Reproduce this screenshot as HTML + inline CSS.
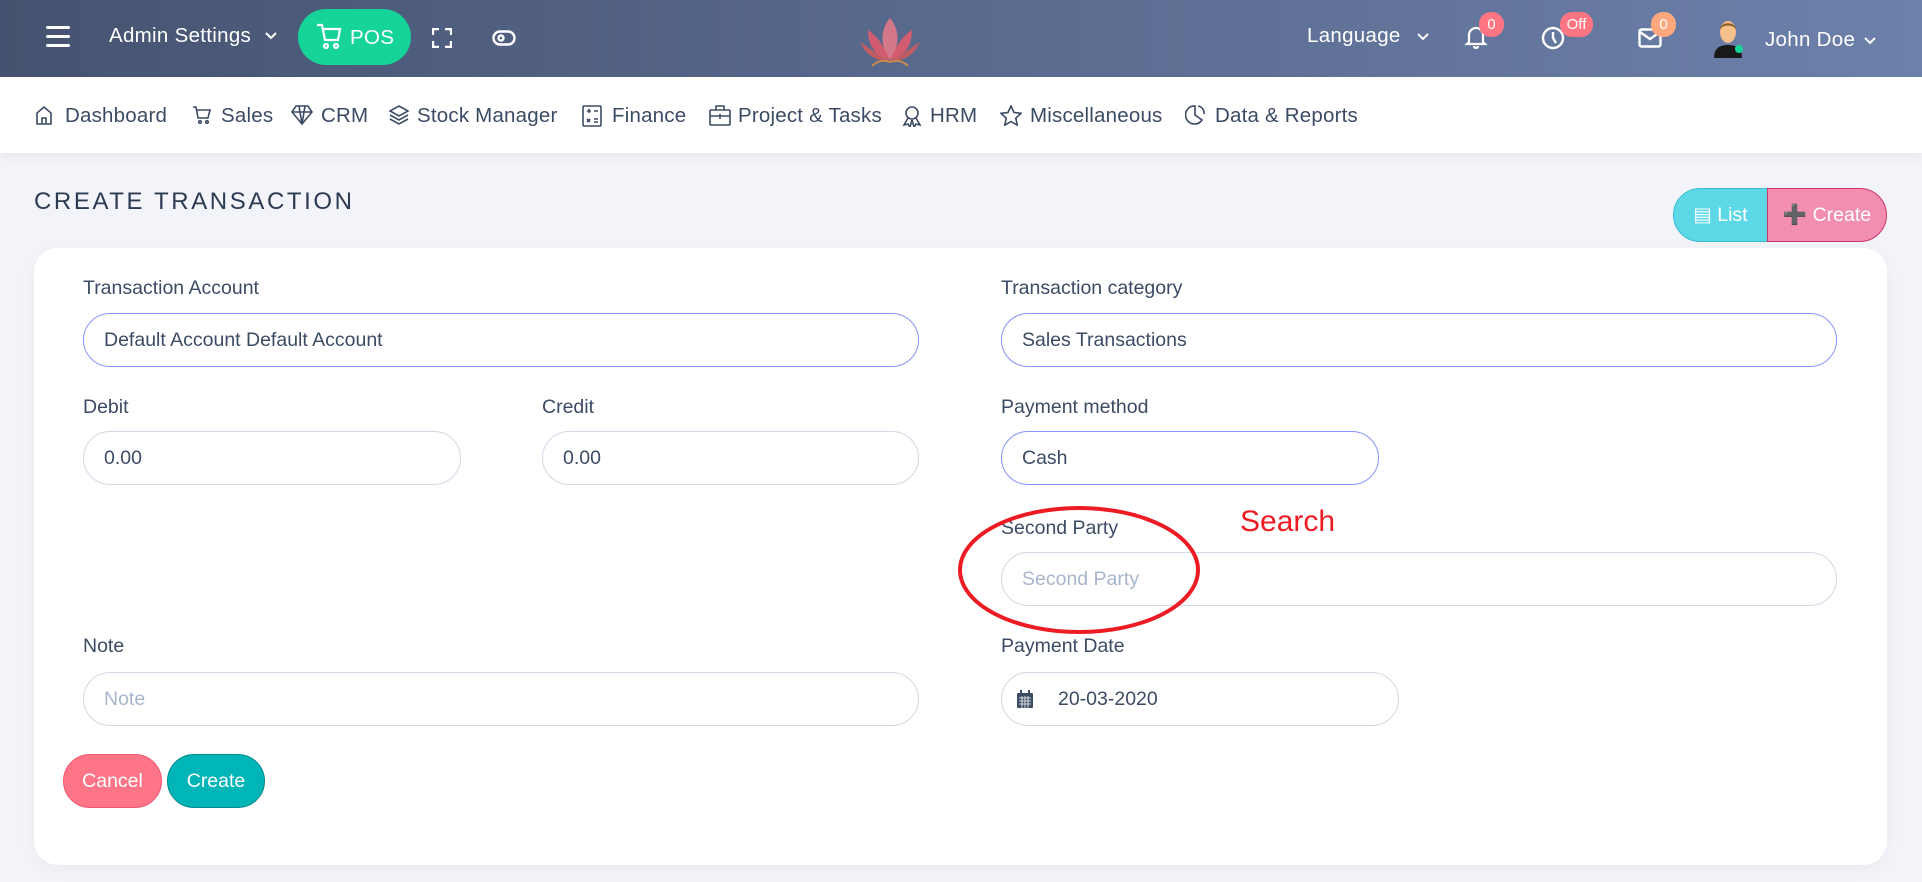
<!DOCTYPE html>
<html><head><meta charset="utf-8"><style>
*{box-sizing:border-box;margin:0;padding:0}
body{width:1922px;height:882px;overflow:hidden;background:#f3f4f9;font-family:"Liberation Sans",sans-serif;color:#3c4b64;position:relative}
.hdr{position:absolute;left:0;top:0;width:1922px;height:77px;background:linear-gradient(90deg,#465370,#5a6a8e 50%,#6c80aa)}
.nav{position:absolute;left:0;top:77px;width:1922px;height:76px;background:#fff;box-shadow:0 4px 10px rgba(0,0,0,.05)}
.a{position:absolute}
.w{color:#fff;font-size:20.5px;letter-spacing:.3px}
.nt{position:absolute;top:104px;font-size:20.5px;color:#3c4b64;letter-spacing:.2px}
.ic{position:absolute;top:105px}
.badge{position:absolute;background:#ff7582;color:#fff;font-size:15px;border-radius:12px;height:25px;min-width:25px;text-align:center;line-height:25px;padding:0 5px}
.card{position:absolute;left:34px;top:248px;width:1853px;height:617px;background:#fff;border-radius:24px;box-shadow:0 4px 20px rgba(0,0,0,.04)}
.lbl{position:absolute;font-size:19.5px;color:#3c4b64}
.inp{position:absolute;height:54px;border:1px solid #d1d9e6;border-radius:27px;font-size:19.5px;color:#3c4b64;padding-left:20px;line-height:52px}
.foc{border-color:#8795f7}
.ph{color:#a8b6cc}
.btn{position:absolute;height:54px;border-radius:27px;color:#fff;font-size:19.5px;text-align:center;line-height:52px}
</style></head><body>
<div class="hdr"></div>
<div class="a" style="left:46px;top:26px;width:24px;height:3px;background:#fff;border-radius:2px"></div>
<div class="a" style="left:46px;top:35px;width:24px;height:3px;background:#fff;border-radius:2px"></div>
<div class="a" style="left:46px;top:44px;width:24px;height:3px;background:#fff;border-radius:2px"></div>
<div class="a w" style="left:109px;top:24px">Admin Settings</div>
<svg class="a" style="left:265px;top:32px" width="12" height="8" fill="none" stroke="#fff" stroke-width="2"><path d="M1 1l5 5 5-5"/></svg>
<div class="a" style="left:298px;top:9px;width:113px;height:56px;border-radius:28px;background:#16d39a"></div>
<svg class="a" style="left:316px;top:22px" width="26" height="28" viewBox="0 0 26 28" fill="none" stroke="#fff" stroke-width="2.2"><path d="M1 3h5l3 15h13l2-11H8"/><circle cx="10" cy="24" r="2"/><circle cx="20" cy="24" r="2"/></svg>
<div class="a w" style="left:350px;top:26px">POS</div>
<svg class="a" style="left:432px;top:28px" width="20" height="20" fill="none" stroke="#fff" stroke-width="2.4"><path d="M1 7V1h6M13 1h6v6M19 13v6h-6M7 19H1v-6"/></svg>
<svg class="a" style="left:492px;top:30px" width="24" height="16" fill="none" stroke="#fff" stroke-width="2.4"><rect x="1.5" y="1.5" width="21" height="13" rx="6.5"/><circle cx="9" cy="8" r="2.5"/></svg>
<svg class="a" style="left:858px;top:16px" width="64" height="52" viewBox="0 0 64 52"><path d="M32 2 C22 14 22 30 32 44 C42 30 42 14 32 2Z" fill="#e07a8a" opacity=".9"/><path d="M10 14 C10 32 20 42 32 44 C26 32 22 22 10 14Z" fill="#e85a6a" opacity=".85"/><path d="M54 14 C54 32 44 42 32 44 C38 32 42 22 54 14Z" fill="#e85a6a" opacity=".85"/><path d="M2 26 C8 40 20 46 32 45 C20 40 12 32 2 26Z" fill="#d85a5a" opacity=".8"/><path d="M62 26 C56 40 44 46 32 45 C44 40 52 32 62 26Z" fill="#d85a5a" opacity=".8"/><path d="M14 50 C20 44 26 44 32 46 C38 44 44 44 50 50" stroke="#c88a4a" stroke-width="2" fill="none"/></svg>
<div class="a w" style="left:1307px;top:24px">Language</div>
<svg class="a" style="left:1417px;top:33px" width="12" height="8" fill="none" stroke="#fff" stroke-width="2"><path d="M1 1l5 5 5-5"/></svg>
<svg class="a" style="left:1464px;top:24px" width="24" height="26" fill="none" stroke="#fff" stroke-width="2.2"><path d="M5 18V11a7 7 0 0 1 14 0v7l2 2H3z"/><path d="M10 22a2 2 0 0 0 4 0"/></svg>
<div class="badge" style="left:1479px;top:12px">0</div>
<svg class="a" style="left:1541px;top:26px" width="24" height="24" fill="none" stroke="#fff" stroke-width="2.4"><circle cx="12" cy="12" r="10"/><path d="M12 6v6l3 5"/></svg>
<div class="badge" style="left:1560px;top:12px;width:33px">Off</div>
<svg class="a" style="left:1638px;top:28px" width="24" height="20" fill="none" stroke="#fff" stroke-width="2.4"><rect x="1.5" y="1.5" width="21" height="17" rx="2"/><path d="M2 4l10 7 10-7"/></svg>
<div class="badge" style="left:1651px;top:12px;background:#ffa87d">0</div>
<svg class="a" style="left:1712px;top:18px" width="32" height="40" viewBox="0 0 32 40"><path d="M2 40 C2 30 8 27 16 27 C24 27 30 30 30 40Z" fill="#1a1a1a"/><ellipse cx="16" cy="14" rx="8" ry="11" fill="#f5c08a"/><path d="M8 12 C8 3 24 3 24 12 C22 6 10 6 8 12Z" fill="#8a5a1a"/><circle cx="27" cy="31" r="4" fill="#16d39a"/></svg>
<div class="a w" style="left:1765px;top:28px">John Doe</div>
<svg class="a" style="left:1864px;top:37px" width="12" height="8" fill="none" stroke="#fff" stroke-width="2"><path d="M1 1l5 5 5-5"/></svg>

<div class="nav"></div>
<svg class="ic" style="left:35px" width="18" height="20" fill="none" stroke="#3c4b64" stroke-width="1.6"><path d="M2 19V8l7-6 7 6v11zM7 19v-6h4v6"/></svg>
<div class="nt" style="left:65px">Dashboard</div>
<svg class="ic" style="left:192px" width="20" height="20" fill="none" stroke="#3c4b64" stroke-width="1.6"><path d="M1 2h3l2 11h10l2-8H5"/><circle cx="8" cy="17" r="1.3"/><circle cx="15" cy="17" r="1.3"/></svg>
<div class="nt" style="left:221px">Sales</div>
<svg class="ic" style="left:291px" width="22" height="20" fill="none" stroke="#3c4b64" stroke-width="1.6"><path d="M5 1h12l4 6-10 12L1 7zM1 7h20M8 1l3 18 3-18"/></svg>
<div class="nt" style="left:321px">CRM</div>
<svg class="ic" style="left:389px" width="20" height="20" fill="none" stroke="#3c4b64" stroke-width="1.6"><path d="M10 1l9 5-9 5-9-5zM1 10l9 5 9-5M1 14l9 5 9-5"/></svg>
<div class="nt" style="left:417px">Stock Manager</div>
<svg class="ic" style="left:582px" width="20" height="22" fill="none" stroke="#3c4b64" stroke-width="1.6"><rect x="1" y="1" width="18" height="20" rx="1"/><path d="M5 6h4M7 4v4M12 6h4M5 14l3 3M8 14l-3 3M12 14h4M12 17h4"/></svg>
<div class="nt" style="left:612px">Finance</div>
<svg class="ic" style="left:709px" width="22" height="21" fill="none" stroke="#3c4b64" stroke-width="1.6"><rect x="1" y="5" width="20" height="15" rx="1"/><path d="M7 5V1h8v4M1 11h20M11 9v5"/></svg>
<div class="nt" style="left:738px">Project &amp; Tasks</div>
<svg class="ic" style="left:902px" width="20" height="22" fill="none" stroke="#3c4b64" stroke-width="1.6"><circle cx="10" cy="8" r="6"/><path d="M6 13l-4 7 4-1 2 3 2-7M14 13l4 7-4-1-2 3-2-7"/></svg>
<div class="nt" style="left:930px">HRM</div>
<svg class="ic" style="left:1000px" width="22" height="21" fill="none" stroke="#3c4b64" stroke-width="1.6"><path d="M11 1l3 6.5 7 .8-5.2 4.8 1.4 7L11 16.6 4.8 20.1l1.4-7L1 8.3l7-.8z"/></svg>
<div class="nt" style="left:1030px">Miscellaneous</div>
<svg class="ic" style="left:1185px" width="20" height="20" fill="none" stroke="#3c4b64" stroke-width="1.6"><path d="M10 1v9l7 5A9 9 0 1 1 10 1zM13 1a7 7 0 0 1 6 8"/></svg>
<div class="nt" style="left:1215px">Data &amp; Reports</div>

<div class="a" style="left:34px;top:188px;font-size:24px;letter-spacing:2.6px;color:#2c3a52">CREATE TRANSACTION</div>
<div class="btn" style="left:1673px;top:188px;width:95px;background:#5dd8e6;border:1px solid #3bbdd0;border-radius:27px 0 0 27px">&#9636; List</div>
<div class="btn" style="left:1767px;top:188px;width:120px;background:#f28fb0;border:1px solid #d0346a;border-radius:0 27px 27px 0">&#10133; Create</div>

<div class="card"></div>
<div class="lbl" style="left:83px;top:277px">Transaction Account</div>
<div class="inp foc" style="left:83px;top:313px;width:836px">Default Account Default Account</div>
<div class="lbl" style="left:1001px;top:277px">Transaction category</div>
<div class="inp foc" style="left:1001px;top:313px;width:836px">Sales Transactions</div>
<div class="lbl" style="left:83px;top:396px">Debit</div>
<div class="inp" style="left:83px;top:431px;width:378px">0.00</div>
<div class="lbl" style="left:542px;top:396px">Credit</div>
<div class="inp" style="left:542px;top:431px;width:377px">0.00</div>
<div class="lbl" style="left:1001px;top:396px">Payment method</div>
<div class="inp foc" style="left:1001px;top:431px;width:378px">Cash</div>
<div class="lbl" style="left:1001px;top:517px">Second Party</div>
<div class="inp ph" style="left:1001px;top:552px;width:836px">Second Party</div>
<div class="a" style="left:1240px;top:505px;font-size:30px;color:#ed1c24">Search</div>
<svg class="a" style="left:955px;top:498px" width="250" height="150"><ellipse cx="124" cy="72" rx="119" ry="62" fill="none" stroke="#ed1c24" stroke-width="4"/></svg>
<div class="lbl" style="left:83px;top:635px">Note</div>
<div class="inp ph" style="left:83px;top:672px;width:836px">Note</div>
<div class="lbl" style="left:1001px;top:635px">Payment Date</div>
<div class="inp" style="left:1001px;top:672px;width:398px;padding-left:56px">20-03-2020</div>
<svg class="a" style="left:1016px;top:690px" width="18" height="18" fill="#3c4b64"><rect x="1" y="3" width="16" height="15" rx="1"/><rect x="4" y="0" width="2" height="5"/><rect x="12" y="0" width="2" height="5"/><path d="M3 8h12M3 11h12M3 14h12M6 6v12M9 6v12M12 6v12" stroke="#fff" stroke-width=".8"/></svg>
<div class="btn" style="left:63px;top:754px;width:99px;background:#ff7588;border:1px solid #f05570">Cancel</div>
<div class="btn" style="left:167px;top:754px;width:98px;background:#00b5b8;border:1px solid #008a8d">Create</div>
</body></html>
